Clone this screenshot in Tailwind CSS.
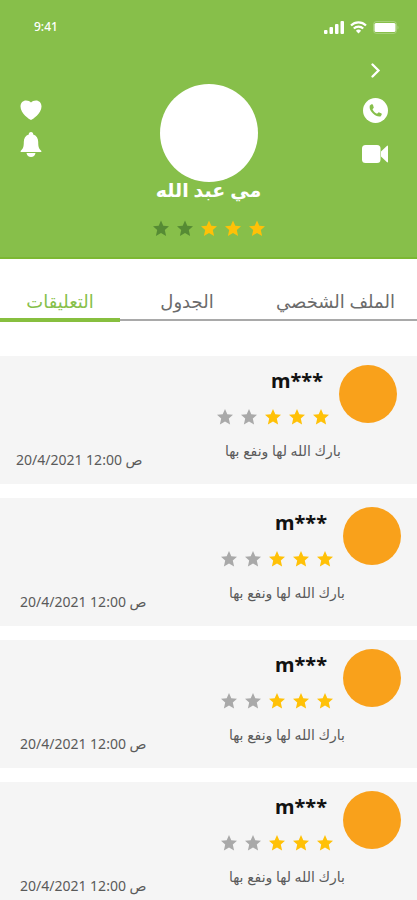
<!doctype html>
<html lang="ar" dir="rtl">
  <head>
    <meta charset="UTF-8" />
    <meta name="viewport" content="width=device-width, initial-scale=1.0" />
    <title>التعليقات</title>
    <script src="https://cdn.jsdelivr.net/npm/@tailwindcss/browser@4"></script>
  </head>
  <body class="bg-white font-['Noto_Sans','DejaVu_Sans',sans-serif] overflow-x-hidden">
    <svg class="hidden">
      <symbol id="star" viewBox="0 0 16 16">
        <path d="M8 0l2.300 5.200 5.700.6-4.200 3.800 1.300 5.800L8 12.400l-5.100 3 1.300-5.800L0 5.800l5.700-.6z" />
      </symbol>
    </svg>

    <header class="bg-[#87bf4a] border-b-2 border-[#7cb832] pb-5">
      <!-- Status bar -->
      <div dir="ltr" class="flex items-center justify-between pt-4 pl-[34px] pr-[18px] text-white">
        <span class="text-xs leading-[22px] font-medium">9:41</span>
        <div class="flex items-center gap-1.5 text-white">
          <svg class="w-5 h-[13px]" viewBox="0 0 20 13" fill="currentColor">
            <rect x="0" y="9" width="3.500" height="4" rx="1" />
            <rect x="5.500" y="6" width="3.500" height="7" rx="1" />
            <rect x="11" y="3" width="3.500" height="10" rx="1" />
            <rect x="16.500" y="0" width="3.500" height="13" rx="1" />
          </svg>
          <svg class="w-[17px] h-[13px]" viewBox="0 0 17 13" fill="none" stroke="currentColor" stroke-width="2.200">
            <path d="M1 4.500a10.800 10.800 0 0 1 15 0" />
            <path d="M3.800 7.500a6.800 6.800 0 0 1 9.400 0" />
            <path d="M8.500 12.500L5.900 9.800a3.800 3.800 0 0 1 5.200 0z" fill="currentColor" stroke="none" />
          </svg>
          <svg class="w-[26px] h-[13px]" viewBox="0 0 26 13">
            <rect x=".5" y=".5" width="23" height="12" rx="3" fill="none" stroke="#fff" stroke-opacity=".25" />
            <rect x="1.500" y="2" width="21" height="9" rx="1.500" fill="#fff" />
            <path d="M24.500 4.500v4c1.300-.6 1.300-3.400 0-4z" fill="#fff" fill-opacity=".3" />
          </svg>
        </div>
      </div>

      <div class="flex text-white">
        <div class="w-[84px] pt-6 flex flex-col items-center">
          <button type="button" aria-label="رجوع" class="h-4">
            <svg class="w-4 h-4" viewBox="0 0 16 16" fill="none" stroke="currentColor" stroke-width="2.300" stroke-linecap="round">
              <path d="M5.500 2.500L11.500 8.500l-6 6" />
            </svg>
          </button>
          <button type="button" aria-label="اتصال" class="mt-5">
            <svg class="w-[25px] h-[25px]" viewBox="0 0 25 25">
              <circle cx="12.500" cy="12.500" r="12.500" fill="#fff" />
              <path d="M8.300 6.300L6.700 7.700c-.5 3 1 5.700 3.300 7.800 2.200 2.100 5 3.400 7.500 2.900l1.200-1.700-.1-1.200-2.900-1.300-1.700 1.500c-2-.8-3.600-2.300-4.500-4.400l1.300-1.600-.9-3.200z" fill="#87bf4a" />
            </svg>
          </button>
          <button type="button" aria-label="مكالمة فيديو" class="mt-[22px]">
            <svg class="w-[26px] h-[18px]" viewBox="0 0 26 18" fill="currentColor">
              <rect width="18.500" height="18" rx="3.500" />
              <path d="M19 6.500L24.800.9Q26 0 26 1.500v15q0 1.500-1.200.6L19 11.500z" />
            </svg>
          </button>
        </div>

        <div class="flex-1 pt-[46px] flex flex-col items-center">
          <div class="w-[98px] h-[98px] rounded-full bg-white"></div>
          <h1 class="-mt-2.5 text-[19px] leading-9 font-bold whitespace-nowrap">مي عبد الله</h1>
          <div role="img" aria-label="3 من 5" class="mt-3 flex gap-2 text-[#ffc107]">
            <svg class="w-4 h-[17px]" fill="currentColor"><use href="#star" /></svg>
            <svg class="w-4 h-[17px]" fill="currentColor"><use href="#star" /></svg>
            <svg class="w-4 h-[17px]" fill="currentColor"><use href="#star" /></svg>
            <svg class="w-4 h-[17px] text-[#568b34]" fill="currentColor"><use href="#star" /></svg>
            <svg class="w-4 h-[17px] text-[#568b34]" fill="currentColor"><use href="#star" /></svg>
          </div>
        </div>

        <div class="w-[84px] pt-[62px] pe-5 flex flex-col items-end">
          <button type="button" aria-label="المفضلة">
            <svg class="w-[22px] h-5" viewBox="0 0 22 20" fill="currentColor">
              <path d="M11 20C9.500 19.500.5 13.500.5 6.500.5 2.800 3 .5 6 .5c2.200 0 4 .7 5 2 1-1.300 2.800-2 5-2 3 0 5.500 2.300 5.500 6C21.500 13.500 12.500 19.500 11 20z" />
            </svg>
          </button>
          <button type="button" aria-label="الإشعارات" class="mt-3">
            <svg class="w-[22px] h-[26px]" viewBox="0 0 22 26" fill="currentColor">
              <path d="M11 0c1.500 0 2.300 1 2.200 2.600C16.500 3.600 18.200 6.500 18.200 10c0 5 .8 7 3 8.700.5.600.3 1.300-.6 1.300H1.400c-.9 0-1.100-.7-.6-1.300 2.200-1.700 3-3.700 3-8.700 0-3.500 1.700-6.400 5-7.400C8.700 1 9.500 0 11 0z" />
              <path d="M6.500 21h9c-.5 2.500-2 4-4.500 4s-4-1.500-4.500-4z" />
            </svg>
          </button>
        </div>
      </div>
    </header>

    <nav class="flex h-[63px] text-lg text-[#6b6b6b] whitespace-nowrap">
      <button type="button" class="flex-1 pt-7 pb-1 mb-px border-b-2 border-[#a9a9a9]">الملف الشخصي</button>
      <button type="button" class="w-[134px] pt-7 pb-1 mb-px border-b-2 border-[#a9a9a9]">الجدول</button>
      <button type="button" aria-current="page" class="w-[120px] pt-7 pb-1 border-b-4 border-[#87bf3f] text-[#87bf4a]">التعليقات</button>
    </nav>

    <main class="mt-[34px] flex flex-col gap-3.5">
      <article class="h-32 flex bg-[#f5f5f5] pt-[9px] ps-5 pe-4">
        <div class="shrink-0 w-[58px] h-[58px] rounded-full bg-[#f9a11b]"></div>
        <div class="whitespace-nowrap">
          <h2 dir="ltr" class="pr-4 text-right text-xl leading-8 font-bold text-[#111]">m***</h2>
          <div role="img" aria-label="3 من 5" class="mt-3 ms-2.5 flex gap-2 text-[#ffc107]">
            <svg class="w-4 h-4" fill="currentColor"><use href="#star" /></svg>
            <svg class="w-4 h-4" fill="currentColor"><use href="#star" /></svg>
            <svg class="w-4 h-4" fill="currentColor"><use href="#star" /></svg>
            <svg class="w-4 h-4 text-[#a9a9a9]" fill="currentColor"><use href="#star" /></svg>
            <svg class="w-4 h-4 text-[#a9a9a9]" fill="currentColor"><use href="#star" /></svg>
          </div>
          <p class="-ms-0.5 mt-3.5 text-sm leading-6 text-[#5a5a5a]">بارك الله لها ونفع بها</p>
        </div>
        <time dir="ltr" class="mr-auto self-end pb-3 text-sm leading-6 text-[#5a5a5a] whitespace-nowrap">20/4/2021 12:00 ص</time>
      </article>

      <article class="h-32 flex bg-[#f5f5f5] pt-[9px] ps-4 pe-5">
        <div class="shrink-0 w-[58px] h-[58px] rounded-full bg-[#f9a11b]"></div>
        <div class="whitespace-nowrap">
          <h2 dir="ltr" class="pr-4 text-right text-xl leading-8 font-bold text-[#111]">m***</h2>
          <div role="img" aria-label="3 من 5" class="mt-3 ms-2.5 flex gap-2 text-[#ffc107]">
            <svg class="w-4 h-4" fill="currentColor"><use href="#star" /></svg>
            <svg class="w-4 h-4" fill="currentColor"><use href="#star" /></svg>
            <svg class="w-4 h-4" fill="currentColor"><use href="#star" /></svg>
            <svg class="w-4 h-4 text-[#a9a9a9]" fill="currentColor"><use href="#star" /></svg>
            <svg class="w-4 h-4 text-[#a9a9a9]" fill="currentColor"><use href="#star" /></svg>
          </div>
          <p class="-ms-0.5 mt-3.5 text-sm leading-6 text-[#5a5a5a]">بارك الله لها ونفع بها</p>
        </div>
        <time dir="ltr" class="mr-auto self-end pb-3 text-sm leading-6 text-[#5a5a5a] whitespace-nowrap">20/4/2021 12:00 ص</time>
      </article>

      <article class="h-32 flex bg-[#f5f5f5] pt-[9px] ps-4 pe-5">
        <div class="shrink-0 w-[58px] h-[58px] rounded-full bg-[#f9a11b]"></div>
        <div class="whitespace-nowrap">
          <h2 dir="ltr" class="pr-4 text-right text-xl leading-8 font-bold text-[#111]">m***</h2>
          <div role="img" aria-label="3 من 5" class="mt-3 ms-2.5 flex gap-2 text-[#ffc107]">
            <svg class="w-4 h-4" fill="currentColor"><use href="#star" /></svg>
            <svg class="w-4 h-4" fill="currentColor"><use href="#star" /></svg>
            <svg class="w-4 h-4" fill="currentColor"><use href="#star" /></svg>
            <svg class="w-4 h-4 text-[#a9a9a9]" fill="currentColor"><use href="#star" /></svg>
            <svg class="w-4 h-4 text-[#a9a9a9]" fill="currentColor"><use href="#star" /></svg>
          </div>
          <p class="-ms-0.5 mt-3.5 text-sm leading-6 text-[#5a5a5a]">بارك الله لها ونفع بها</p>
        </div>
        <time dir="ltr" class="mr-auto self-end pb-3 text-sm leading-6 text-[#5a5a5a] whitespace-nowrap">20/4/2021 12:00 ص</time>
      </article>

      <article class="h-32 flex bg-[#f5f5f5] pt-[9px] ps-4 pe-5">
        <div class="shrink-0 w-[58px] h-[58px] rounded-full bg-[#f9a11b]"></div>
        <div class="whitespace-nowrap">
          <h2 dir="ltr" class="pr-4 text-right text-xl leading-8 font-bold text-[#111]">m***</h2>
          <div role="img" aria-label="3 من 5" class="mt-3 ms-2.5 flex gap-2 text-[#ffc107]">
            <svg class="w-4 h-4" fill="currentColor"><use href="#star" /></svg>
            <svg class="w-4 h-4" fill="currentColor"><use href="#star" /></svg>
            <svg class="w-4 h-4" fill="currentColor"><use href="#star" /></svg>
            <svg class="w-4 h-4 text-[#a9a9a9]" fill="currentColor"><use href="#star" /></svg>
            <svg class="w-4 h-4 text-[#a9a9a9]" fill="currentColor"><use href="#star" /></svg>
          </div>
          <p class="-ms-0.5 mt-3.5 text-sm leading-6 text-[#5a5a5a]">بارك الله لها ونفع بها</p>
        </div>
        <time dir="ltr" class="mr-auto self-end pb-3 text-sm leading-6 text-[#5a5a5a] whitespace-nowrap">20/4/2021 12:00 ص</time>
      </article>
    </main>
  </body>
</html>
